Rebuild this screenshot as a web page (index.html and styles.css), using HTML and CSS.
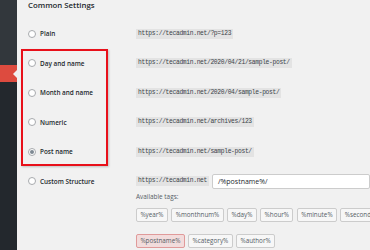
FILE: index.html
```html
<!DOCTYPE html>
<html lang="en">
<head>
<meta charset="UTF-8">
<title>Permalink Settings</title>
<link rel="stylesheet" href="styles.css">
</head>
<body>
  <!-- Admin menu strip -->
  <div class="sidebar">
    <div class="menu-top"></div>
    <div class="menu-current"><span class="menu-arrow"></span></div>
  </div>

  <!-- Settings -->
  <div class="main">
    <h2>Common Settings</h2>
    <div class="options">
      <label class="option"><span class="radio"></span>Plain</label>
      <div class="value"><code>https://tecadmin.net/?p=123</code></div>

      <label class="option"><span class="radio"></span>Day and name</label>
      <div class="value"><code>https://tecadmin.net/2020/04/21/sample-post/</code></div>

      <label class="option"><span class="radio"></span>Month and name</label>
      <div class="value"><code>https://tecadmin.net/2020/04/sample-post/</code></div>

      <label class="option"><span class="radio"></span>Numeric</label>
      <div class="value"><code>https://tecadmin.net/archives/123</code></div>

      <label class="option"><span class="radio checked"></span>Post name</label>
      <div class="value"><code>https://tecadmin.net/sample-post/</code></div>

      <label class="option"><span class="radio"></span>Custom Structure</label>
      <div class="value custom">
        <code>https://tecadmin.net</code>
        <div class="structure">/%postname%/</div>
      </div>
    </div>

    <div class="tags">
      <p class="tags-title">Available tags:</p>
      <div class="tag-row">
        <span class="tag">%year%</span>
        <span class="tag">%monthnum%</span>
        <span class="tag">%day%</span>
        <span class="tag">%hour%</span>
        <span class="tag">%minute%</span>
        <span class="tag">%second%</span>
      </div>
      <div class="tag-row">
        <span class="tag active">%postname%</span>
        <span class="tag">%category%</span>
        <span class="tag">%author%</span>
      </div>
    </div>

    <!-- Annotation overlays -->
    <div class="highlight"></div>
    <svg class="pointer" width="14" height="12" viewBox="0 0 14 12">
      <path d="M-2 11 L10 4" stroke="#e8101a" stroke-width="3" stroke-linecap="round" fill="none"/>
    </svg>
  </div>
</body>
</html>
```

FILE: styles.css
```css
:root {
  --bg: #f1f1f1;
  --text: #23282d;
  --muted: #555d66;
  --menu: #23282d;
  --menu-sub: #32373c;
  --menu-active: #dd4b3f;
  --mark: #e8101a;
}

* { box-sizing: border-box; margin: 0; padding: 0; }
html, body { height: 100%; }
body {
  display: flex;
  background: var(--bg);
  color: var(--text);
  font-family: 'Open Sans', sans-serif;
  overflow: hidden;
}

/* Sidebar */
.sidebar {
  width: 17px;
  flex-shrink: 0;
  background: var(--menu);
}
.menu-top {
  height: 65px;
  background: var(--menu-sub);
}
.menu-current {
  height: 17px;
  background: var(--menu-active);
  display: flex;
  align-items: center;
  justify-content: flex-end;
}
.menu-arrow {
  width: 0;
  height: 0;
  border-top: 4px solid transparent;
  border-bottom: 4px solid transparent;
  border-right: 4px solid var(--bg);
}

/* Main */
.main {
  position: relative;
  flex: 1;
  padding: 0 0 0 11px;
  overflow: hidden;
}
h2 {
  font-size: 7.8px;
  font-weight: 600;
  line-height: 11px;
}

.options {
  display: grid;
  grid-template-columns: 108px 1fr;
  grid-auto-rows: 29.5px;
  margin-top: 8px;
}
.option {
  display: flex;
  align-items: center;
  gap: 4px;
  font-size: 6.4px;
  font-weight: 600;
  white-space: nowrap;
}
.radio {
  width: 8px;
  height: 8px;
  border: 1px solid #a7aaad;
  border-radius: 50%;
  background: #fff;
  display: flex;
  align-items: center;
  justify-content: center;
}
.radio.checked::after {
  content: '';
  width: 4px;
  height: 4px;
  border-radius: 50%;
  background: #7e8993;
}
.value {
  display: flex;
  align-items: center;
  white-space: nowrap;
}
code {
  font-family: 'Liberation Mono', monospace;
  font-size: 6.3px;
  letter-spacing: -0.33px;
  line-height: 10px;
  padding: 0 2px;
  background: #e3e3e3;
  color: #3c434a;
}
.structure {
  margin-left: 3px;
  flex: 1;
  height: 15px;
  padding: 0 5px;
  background: #fff;
  border: 1px solid #ccc;
  border-radius: 2px;
  font-size: 7px;
  line-height: 13px;
}

/* Tags */
.tags {
  margin-left: 108px;
  margin-top: -4px;
}
.tags-title {
  font-size: 6.4px;
  color: var(--muted);
  line-height: 9px;
}
.tag-row {
  display: flex;
  gap: 3.4px;
  margin-top: 7px;
  white-space: nowrap;
}
.tag-row + .tag-row { margin-top: 12.5px; }
.tag {
  height: 13.5px;
  padding: 0 3.4px;
  border: 1px solid #ccc;
  border-radius: 2px;
  background: #f7f7f7;
  font-size: 6.3px;
  line-height: 11.5px;
  color: var(--muted);
}
.tag.active {
  background: #f2dcdc;
  border-color: #e09a9a;
}

/* Annotations */
.highlight {
  position: absolute;
  left: 4px;
  top: 49px;
  width: 87px;
  height: 117px;
  border: 2.5px solid var(--mark);
  box-shadow: 1px 1px 2px rgba(0, 0, 0, 0.2);
}
.pointer {
  position: absolute;
  left: -17px;
  top: 144px;
  overflow: visible;
}
```
